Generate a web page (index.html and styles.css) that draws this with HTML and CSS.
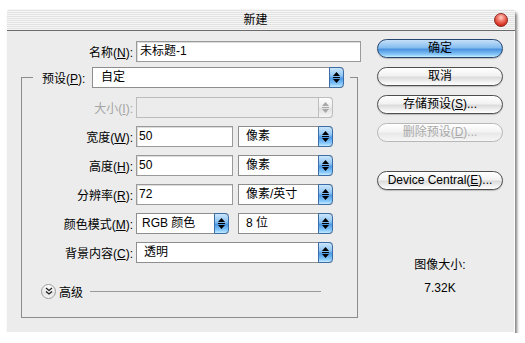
FILE: index.html
```html
<!DOCTYPE html>
<html lang="zh-CN">
<head>
    <meta charset="UTF-8">
    <title>新建</title>
    <link rel="stylesheet" href="styles.css">
</head>
<body>
    <div class="window">
        <div class="titlebar">
            <span class="title">新建</span>
            <span class="close"></span>
        </div>
        <div class="content">
            <div class="left">
                <div class="row">
                    <label class="lbl">名称(<u>N</u>):</label>
                    <div class="input name-input">未标题-1</div>
                </div>
                <div class="group">
                    <div class="group-head">
                        <label class="head-lbl">预设(<u>P</u>):</label>
                        <div class="select preset"><span>自定</span><i class="arrow"><svg width="7" height="11" viewBox="0 0 7 11"><polygon points="3.5,0 7,4 0,4"/><rect x="0" y="5" width="7" height="1"/><polygon points="0,7 7,7 3.5,11"/></svg></i></div>
                    </div>
                    <div class="row first">
                        <label class="lbl disabled">大小(<u>I</u>):</label>
                        <div class="select wide off"><span></span><i class="arrow"><svg width="7" height="11" viewBox="0 0 7 11"><polygon points="3.5,0 7,4 0,4"/><rect x="0" y="5" width="7" height="1"/><polygon points="0,7 7,7 3.5,11"/></svg></i></div>
                    </div>
                    <div class="row">
                        <label class="lbl">宽度(<u>W</u>):</label>
                        <div class="input num">50</div>
                        <div class="select unit"><span>像素</span><i class="arrow"><svg width="7" height="11" viewBox="0 0 7 11"><polygon points="3.5,0 7,4 0,4"/><rect x="0" y="5" width="7" height="1"/><polygon points="0,7 7,7 3.5,11"/></svg></i></div>
                    </div>
                    <div class="row">
                        <label class="lbl">高度(<u>H</u>):</label>
                        <div class="input num">50</div>
                        <div class="select unit"><span>像素</span><i class="arrow"><svg width="7" height="11" viewBox="0 0 7 11"><polygon points="3.5,0 7,4 0,4"/><rect x="0" y="5" width="7" height="1"/><polygon points="0,7 7,7 3.5,11"/></svg></i></div>
                    </div>
                    <div class="row">
                        <label class="lbl">分辨率(<u>R</u>):</label>
                        <div class="input num">72</div>
                        <div class="select unit"><span>像素/英寸</span><i class="arrow"><svg width="7" height="11" viewBox="0 0 7 11"><polygon points="3.5,0 7,4 0,4"/><rect x="0" y="5" width="7" height="1"/><polygon points="0,7 7,7 3.5,11"/></svg></i></div>
                    </div>
                    <div class="row">
                        <label class="lbl">颜色模式(<u>M</u>):</label>
                        <div class="select mode"><span>RGB 颜色</span><i class="arrow"><svg width="7" height="11" viewBox="0 0 7 11"><polygon points="3.5,0 7,4 0,4"/><rect x="0" y="5" width="7" height="1"/><polygon points="0,7 7,7 3.5,11"/></svg></i></div>
                        <div class="select unit bits"><span>8 位</span><i class="arrow"><svg width="7" height="11" viewBox="0 0 7 11"><polygon points="3.5,0 7,4 0,4"/><rect x="0" y="5" width="7" height="1"/><polygon points="0,7 7,7 3.5,11"/></svg></i></div>
                    </div>
                    <div class="row">
                        <label class="lbl">背景内容(<u>C</u>):</label>
                        <div class="select wide"><span>透明</span><i class="arrow"><svg width="7" height="11" viewBox="0 0 7 11"><polygon points="3.5,0 7,4 0,4"/><rect x="0" y="5" width="7" height="1"/><polygon points="0,7 7,7 3.5,11"/></svg></i></div>
                    </div>
                    <div class="advanced">
                        <span class="toggle"><svg width="8" height="8" viewBox="0 0 8 8"><polyline points="1,1 4,3.5 7,1" /><polyline points="1,4.5 4,7 7,4.5" /></svg></span>
                        <span class="adv-text">高级</span>
                        <span class="adv-line"></span>
                    </div>
                </div>
            </div>
            <div class="right">
                <div class="btn default">确定</div>
                <div class="btn">取消</div>
                <div class="btn">存储预设(<u>S</u>)...</div>
                <div class="btn off">删除预设(<u>D</u>)...</div>
                <div class="btn device">Device Central(<u>E</u>)...</div>
                <div class="size-lbl">图像大小:</div>
                <div class="size-val">7.32K</div>
            </div>
        </div>
    </div>
</body>
</html>
```
FILE: styles.css
```css
* {
    box-sizing: border-box;
}
body {
    margin: 0;
    background: #fff;
    font: 12px "Liberation Sans", "Noto Sans CJK SC", sans-serif;
    color: #000;
}
u {
    text-decoration: underline;
    text-underline-offset: 1px;
}
.window {
    margin: 9px 0 0 7px;
    width: 508px;
    height: 324px;
    background: #ececec;
    border-radius: 4px 4px 0 0;
    box-shadow: inset -1px -1px 0 #fff, 2px 3px 3px rgba(0, 0, 0, 0.5);
}
.titlebar {
    height: 22px;
    display: flex;
    align-items: center;
    border-bottom: 1px solid #6a6a6a;
    border-radius: 4px 4px 0 0;
    background: repeating-linear-gradient(#f6f6f6 0 1px, #e2e2e2 1px 2px);
}
.title {
    flex: 1;
    text-align: center;
    padding-left: 10px;
    line-height: 14px;
}
.close {
    width: 14px;
    height: 14px;
    margin-right: 7px;
    border-radius: 50%;
    border: 1px solid #8a2a22;
    background: radial-gradient(circle at 50% 30%, #ffd0c8 0, #f27a6c 35%, #d42a1c 75%, #b01a10 100%);
}
.content {
    display: flex;
    padding: 10px 0 0 14px;
}
.left {
    width: 337px;
    flex-shrink: 0;
}
.row {
    display: flex;
    align-items: center;
    height: 21px;
}
.lbl {
    width: 112px;
    flex-shrink: 0;
    text-align: right;
    margin-right: 3px;
    white-space: nowrap;
}
.group .lbl {
    width: 111px;
}
.disabled {
    color: #a5a5a5;
}
.input {
    height: 21px;
    flex-shrink: 0;
    background: #fff;
    border: 1px solid #9a9a9a;
    box-shadow: inset 1px 1px 0 #dcdcdc;
    padding: 0 3px;
    line-height: 19px;
}
.name-input {
    width: 225px;
}
.num {
    width: 97px;
    padding-left: 2px;
}
.select {
    height: 21px;
    flex-shrink: 0;
    display: flex;
    background: #fff;
    border: 1px solid #8e8e8e;
    border-right: none;
    border-radius: 0 4px 4px 0;
    line-height: 19px;
}
.select span {
    flex: 1;
    padding-left: 7px;
    white-space: nowrap;
}
.arrow {
    width: 15px;
    margin: -1px 0;
    display: flex;
    align-items: center;
    justify-content: center;
    border: 1px solid #3c6da6;
    border-radius: 0 4px 4px 0;
    background: linear-gradient(#cbe6fb, #8fc4f3 40%, #4d9ae6 55%, #86c8fa 85%, #c6ecff);
}
.arrow svg {
    fill: #000;
}
.off .arrow {
    border-color: #bdbdbd;
    background: linear-gradient(#fdfdfd, #ececec 50%, #e0e0e0 55%, #f6f6f6);
}
.off .arrow svg {
    fill: #a8a8a8;
}
.select.off {
    background: #ececec;
    border-color: #bcbcbc;
}
.preset {
    width: 252px;
}
.preset span {
    padding-left: 8px;
}
.wide {
    width: 197px;
}
.unit {
    width: 95px;
    margin-left: 5px;
}
.mode {
    width: 93px;
}
.mode span {
    padding-left: 5px;
}
.bits {
    margin-left: 9px;
}
.group {
    margin-top: 15px;
    height: 241px;
    border: 1px solid #8c8c8c;
}
.group-head {
    display: flex;
    align-items: center;
    height: 21px;
    margin: -11px 7px 0 11px;
    padding: 0 6px 0 9px;
    background: #ececec;
}
.head-lbl {
    width: 50px;
    white-space: nowrap;
}
.group .row {
    margin-top: 8px;
}
.group .row.first {
    margin-top: 9px;
}
.advanced {
    display: flex;
    align-items: center;
    height: 14px;
    margin-top: 21px;
}
.toggle {
    width: 15px;
    height: 15px;
    margin-left: 19px;
    display: flex;
    align-items: center;
    justify-content: center;
    border: 1px solid #9c9c9c;
    border-radius: 50%;
    background: linear-gradient(#ffffff, #e6e6e6 60%, #f6f6f6);
}
.toggle svg {
    fill: none;
    stroke: #222;
    stroke-width: 1.3;
}
.adv-text {
    margin-left: 3px;
}
.adv-line {
    width: 231px;
    height: 1px;
    margin-left: 7px;
    background: #9a9a9a;
}
.right {
    width: 126px;
    margin: -2px 0 0 19px;
    display: flex;
    flex-direction: column;
    gap: 9px;
}
.btn {
    height: 19px;
    border: 1px solid #4e4e4e;
    border-radius: 10px;
    text-align: center;
    line-height: 17px;
    white-space: nowrap;
    background: linear-gradient(#ffffff, #f2f2f2 45%, #dcdcdc 55%, #f4f4f4 85%, #ffffff);
    box-shadow: 0 1px 1px rgba(0, 0, 0, 0.2);
}
.btn.default {
    border-color: #27466e;
    background: linear-gradient(#c4e0f8, #86bdf0 45%, #4b93e0 55%, #86c6f8 85%, #c9ecff);
}
.btn.off {
    color: #aaa;
    border-color: #b8b8b8;
    box-shadow: none;
    background: linear-gradient(#ffffff, #f4f4f4 45%, #e8e8e8 55%, #f6f6f6);
}
.btn.device {
    margin-top: 20px;
}
.size-lbl,
.size-val {
    text-align: center;
    line-height: 16px;
}
.size-lbl {
    margin-top: 58px;
}
.size-val {
    margin-top: -2px;
}
```
